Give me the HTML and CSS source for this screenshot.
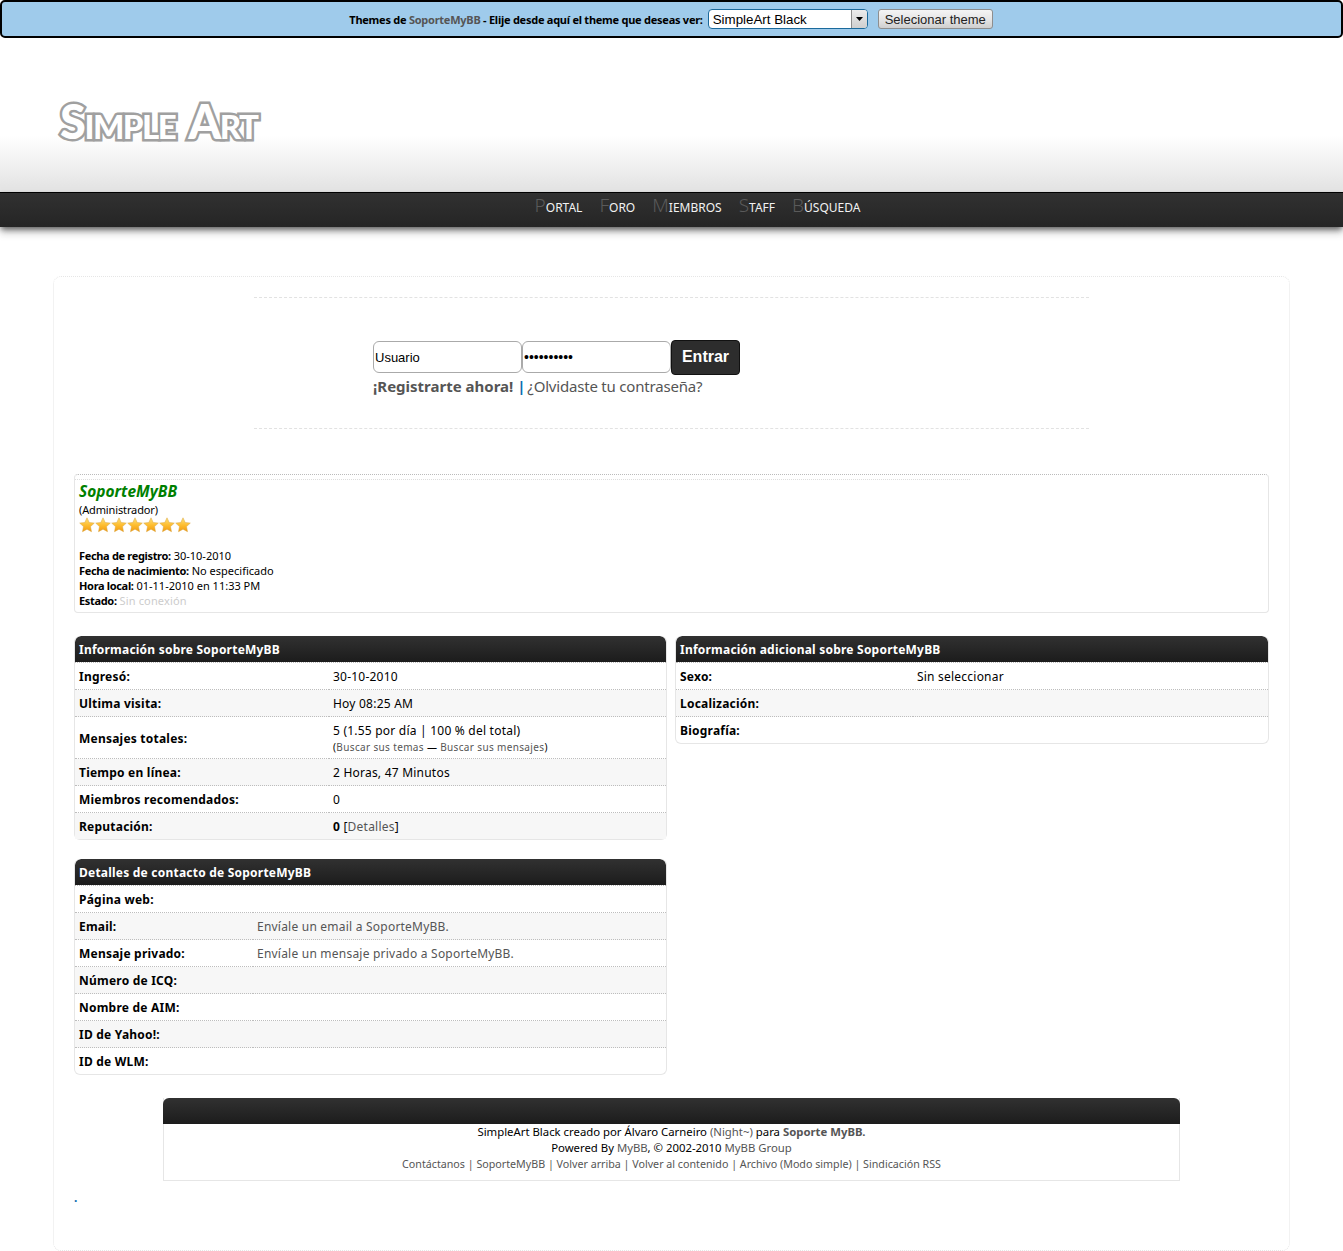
FILE: index.html
```html
<!DOCTYPE html>
<html lang="es">
<head>
<meta charset="utf-8">
<title>Perfil de SoporteMyBB</title>
<link rel="stylesheet" href="styles.css">
</head>
<body>
<svg class="defs" width="0" height="0" aria-hidden="true">
  <defs>
    <linearGradient id="starfill" x1="0" y1="0" x2="0" y2="1">
      <stop offset="0" stop-color="#ffe27a"/>
      <stop offset="0.55" stop-color="#fdbb2d"/>
      <stop offset="1" stop-color="#f09a12"/>
    </linearGradient>
    <symbol id="star" viewBox="0 0 16 16">
      <path d="M8 .8l2.2 4.7 5.1.6-3.8 3.5 1 5.1L8 12.2l-4.5 2.5 1-5.1L.7 6.1l5.1-.6z" fill="url(#starfill)" stroke="#d9a441" stroke-width=".5"/>
    </symbol>
  </defs>
</svg>

<form class="themebar">
  <span class="themebar-label">Themes de <a href="#">SoporteMyBB</a> - Elije desde aquí el theme que deseas ver:</span>
  <span class="selectbox">
    <select class="themeselect"><option>SimpleArt Black</option></select>
    <span class="selectarrow"><svg width="7" height="4" viewBox="0 0 7 4"><path d="M0 0h7L3.5 4z" fill="#000"/></svg></span>
  </span>
  <button type="button" class="themebtn">Selecionar theme</button>
</form>

<header class="masthead">
  <div class="logo">Simple Art</div>
</header>

<nav class="mainnav">
  <a href="#">Portal</a>
  <a href="#">Foro</a>
  <a href="#">Miembros</a>
  <a href="#">Staff</a>
  <a href="#">Búsqueda</a>
</nav>

<main class="page">
  <section class="loginpanel">
    <div class="loginblock">
      <div class="loginrow">
        <input class="logininput" type="text" value="Usuario">
        <input class="logininput pw" type="password" value="contraseña">
        <button type="button" class="loginbtn">Entrar</button>
      </div>
      <div class="loginlinks"><a href="#" class="strong">¡Registrarte ahora!</a> <span class="pipe">|</span> <a href="#" class="forgot">¿Olvidaste tu contraseña?</a></div>
    </div>
  </section>

  <section class="profile">
    <div class="profile-rule"></div>
    <div class="profile-inner">
      <div class="username">SoporteMyBB</div>
      <div class="usertitle">(Administrador)</div>
      <div class="stars">
        <svg class="star"><use href="#star"/></svg><svg class="star"><use href="#star"/></svg><svg class="star"><use href="#star"/></svg><svg class="star"><use href="#star"/></svg><svg class="star"><use href="#star"/></svg><svg class="star"><use href="#star"/></svg><svg class="star"><use href="#star"/></svg>
      </div>
      <div class="facts">
        <div><b>Fecha de registro:</b> 30-10-2010</div>
        <div><b>Fecha de nacimiento:</b> No especificado</div>
        <div><b>Hora local:</b> 01-11-2010 en 11:33 PM</div>
        <div><b>Estado:</b> <span class="offline">Sin conexión</span></div>
      </div>
    </div>
  </section>

  <div class="columns">
    <div class="col">
      <table class="tbox">
        <colgroup><col class="c-info"><col></colgroup>
        <thead><tr><th colspan="2">Información sobre SoporteMyBB</th></tr></thead>
        <tbody>
          <tr><td class="k">Ingresó:</td><td>30-10-2010</td></tr>
          <tr class="alt"><td class="k">Ultima visita:</td><td>Hoy 08:25 AM</td></tr>
          <tr class="tall"><td class="k">Mensajes totales:</td><td>5 (1.55 por día | 100 % del total)<br><span class="small">(<a href="#">Buscar sus temas</a> — <a href="#">Buscar sus mensajes</a>)</span></td></tr>
          <tr class="alt"><td class="k">Tiempo en línea:</td><td>2 Horas, 47 Minutos</td></tr>
          <tr><td class="k">Miembros recomendados:</td><td>0</td></tr>
          <tr class="alt"><td class="k">Reputación:</td><td><b>0</b> [<a href="#">Detalles</a>]</td></tr>
        </tbody>
      </table>
      <table class="tbox contact">
        <colgroup><col class="c-contact"><col></colgroup>
        <thead><tr><th colspan="2">Detalles de contacto de SoporteMyBB</th></tr></thead>
        <tbody>
          <tr><td class="k">Página web:</td><td></td></tr>
          <tr class="alt"><td class="k">Email:</td><td><a href="#">Envíale un email a SoporteMyBB.</a></td></tr>
          <tr><td class="k">Mensaje privado:</td><td><a href="#">Envíale un mensaje privado a SoporteMyBB.</a></td></tr>
          <tr class="alt"><td class="k">Número de ICQ:</td><td></td></tr>
          <tr><td class="k">Nombre de AIM:</td><td></td></tr>
          <tr class="alt"><td class="k">ID de Yahoo!:</td><td></td></tr>
          <tr><td class="k">ID de WLM:</td><td></td></tr>
        </tbody>
      </table>
    </div>
    <div class="col">
      <table class="tbox">
        <colgroup><col class="c-extra"><col></colgroup>
        <thead><tr><th colspan="2">Información adicional sobre SoporteMyBB</th></tr></thead>
        <tbody>
          <tr><td class="k">Sexo:</td><td>Sin seleccionar</td></tr>
          <tr class="alt"><td class="k">Localización:</td><td></td></tr>
          <tr><td class="k">Biografía:</td><td></td></tr>
        </tbody>
      </table>
    </div>
  </div>

  <footer class="credits">
    <div class="credits-head"></div>
    <div class="credits-body">
      <div>SimpleArt Black creado por Álvaro Carneiro <a href="#">(Night~)</a> para <a href="#" class="strong">Soporte MyBB.</a></div>
      <div>Powered By <a href="#">MyBB</a>, © 2002-2010 <a href="#">MyBB Group</a></div>
      <div class="credits-links"><a href="#">Contáctanos</a> | <a href="#">SoporteMyBB</a> | <a href="#">Volver arriba</a> | <a href="#">Volver al contenido</a> | <a href="#">Archivo (Modo simple)</a> | <a href="#">Sindicación RSS</a></div>
    </div>
  </footer>
  <div class="dot">.</div>
</main>
</body>
</html>
```

FILE: styles.css
```css
* { box-sizing: border-box; }
html, body { margin: 0; padding: 0; background: #fff; }
body {
  height: 1251px;
  overflow: hidden;
  font-family: "Noto Sans", "DejaVu Sans", sans-serif;
  font-size: 12px;
  color: #000;
}
a { color: #555; text-decoration: none; }
.defs { position: absolute; }

.themebar {
  height: 38px;
  border: 2px solid #000;
  border-radius: 5px;
  background: #9fcbeb;
  display: flex;
  align-items: center;
  justify-content: center;
  gap: 5px;
  padding-right: 1px;
}
.themebar-label { font-size: 11px; font-weight: 700; letter-spacing: -0.25px; }
.themebar-label a { font-weight: 700; color: #555; }
.selectbox { position: relative; display: block; width: 160px; height: 20px; }
.themeselect {
  appearance: none;
  width: 100%;
  height: 100%;
  border: 1px solid #1b6a9c;
  border-radius: 4px;
  background: #fff;
  padding: 0 0 0 4px;
  font-family: "Liberation Sans", Arial, sans-serif;
  font-size: 13.33px;
  color: #000;
}
.selectarrow {
  position: absolute;
  right: 1px;
  top: 1px;
  bottom: 1px;
  width: 16px;
  display: flex;
  align-items: center;
  justify-content: center;
  background: linear-gradient(#ececec, #cfcfcf);
  border-left: 1px solid #8c8c8c;
  border-radius: 0 3px 3px 0;
}
.themebtn {
  margin-left: 5px;
  width: 115px;
  height: 20px;
  padding: 0;
  border: 1px solid #8e8e8e;
  border-radius: 3px;
  background: linear-gradient(#f4f4f4 0, #e6e6e6 50%, #cfcfcf 100%);
  font-family: "Liberation Sans", Arial, sans-serif;
  font-size: 13px;
  color: #222;
}

.masthead {
  height: 154px;
  background: linear-gradient(#fff 0, #fff 98px, #f0f0f0 128px, #e5e5e5 148px, #e5e5e5 100%);
  padding: 55px 0 0 60px;
}
.logo {
  font-family: "Lato", "Liberation Sans", sans-serif;
  font-variant: small-caps;
  font-weight: 900;
  font-size: 47px;
  line-height: 56px;
  letter-spacing: -1.5px;
  word-spacing: 5px;
  color: #fff;
  -webkit-text-stroke: 5px #a0a0a0;
  paint-order: stroke;
}

.mainnav {
  height: 35px;
  border-top: 1px solid #000;
  background: linear-gradient(#313131, #252525);
  box-shadow: 0 3px 6px -1px rgba(0,0,0,.6), 0 6px 8px rgba(0,0,0,.18);
  display: flex;
  justify-content: center;
  align-items: center;
  gap: 17px;
  padding: 0 0 8px 52px;
  position: relative;
}
.mainnav a {
  color: #f2f2f2;
  text-transform: uppercase;
  font-size: 12px;
  line-height: 20px;
}
.mainnav a::first-letter {
  font-size: 19px;
  font-weight: 300;
  color: #5a5a5a;
}

.page {
  margin: 49px 53px 0;
  width: 1237px;
  height: 975px;
  border: 1px dotted #e6e6e6;
  border-radius: 8px;
  padding: 20px 20px 0;
}

.loginpanel {
  margin: 0 180px;
  height: 132px;
  border-top: 1px dashed #e2e2e2;
  border-bottom: 1px dashed #e2e2e2;
  padding: 42px 0 0 119px;
}
.loginrow { display: flex; align-items: center; height: 35px; }
.logininput {
  width: 149px;
  height: 32px;
  margin-bottom: 1px;
  border: 1px solid #aaa;
  border-radius: 6px;
  padding: 0 1px;
  font-family: "Liberation Sans", Arial, sans-serif;
  font-size: 13px;
  background: #fff;
  color: #000;
}
.pw { font-size: 14px; }
.loginbtn {
  width: 69px;
  height: 35px;
  border: 1px solid #111;
  border-radius: 4px;
  background: #2d2d2d;
  color: #fff;
  font-family: "Liberation Sans", Arial, sans-serif;
  font-size: 16px;
  font-weight: 700;
  padding: 0 0 1px;
}
.loginlinks { font-size: 15px; line-height: 22px; color: #0b6db0; }
.loginlinks a { color: #555; }
.pipe { font-weight: 700; margin-right: -2px; }
.forgot { letter-spacing: -0.2px; }
.strong { font-weight: 700; }

.profile {
  margin-top: 45px;
  height: 139px;
  border-top: 1px dotted #bbb;
  border-bottom: 1px solid #e6e6e6;
  border-left: 1px solid #e6e6e6;
  border-right: 1px solid #e6e6e6;
  border-radius: 4px;
  padding-top: 4px;
}
.profile-rule { width: 75%; border-top: 1px dotted #ddd; }
.profile-inner { padding-left: 4px; }
.username {
  color: #008000;
  font-size: 15.5px;
  font-weight: 700;
  font-style: italic;
  line-height: 23px;
}
.usertitle { font-size: 11px; letter-spacing: -0.13px; line-height: 14px; }
.stars { display: flex; height: 16px; }
.star { width: 16px; height: 16px; display: block; }
.facts { margin-top: 15px; font-size: 11px; line-height: 15px; }
.facts b { letter-spacing: -0.33px; }
.offline { color: #ccc; letter-spacing: 0.15px; }

.columns {
  margin-top: 23px;
  display: grid;
  grid-template-columns: 593px 594px;
  gap: 8px;
  align-items: start;
}
.tbox {
  width: 100%;
  border-collapse: separate;
  border-spacing: 0;
  table-layout: fixed;
  border-radius: 6px;
  border-right: 1px solid #e6e6e6;
  border-left: 1px solid #e6e6e6;
  border-bottom: 1px solid #e6e6e6;
  font-size: 12px;
  letter-spacing: 0.22px;
}
.c-info { width: 254px; }
.c-contact { width: 178px; }
.c-extra { width: 237px; }
.tbox th {
  height: 27px;
  padding: 0 4px;
  text-align: left;
  color: #fff;
  font-size: 12px;
  font-weight: 700;
  background: linear-gradient(#313131 0, #1c1c1c 26px, #fff 26px);
  border-bottom: 1px dotted #bdbdbd;
  border-radius: 6px 6px 0 0;
  background-clip: padding-box;
}
.tbox td {
  height: 27px;
  padding: 1px 4px 0;
  border-bottom: 1px dotted #bdbdbd;
  line-height: 16px;
}
.tbox tbody tr:last-child td { border-bottom: 0; height: 26px; }
.tbox .tall td { height: 42px; padding-top: 2px; }
.tbox .alt td { background: #f7f7f7; }
.k { font-weight: 700; }
.small { font-size: 10px; letter-spacing: 0.35px; line-height: 14px; }
.contact { margin-top: 19px; }

.credits {
  margin: 23px 89px 0;
  width: 1017px;
  border: 1px solid #e6e6e6;
  border-top: 0;
  text-align: center;
}
.credits-head {
  height: 26px;
  margin: 0 -1px;
  border-radius: 6px 6px 0 0;
  background: linear-gradient(#313131, #1c1c1c);
}
.credits-body { font-size: 11.35px; line-height: 16px; padding-bottom: 8px; }
.credits-links { font-size: 10.7px; color: #555; }
.dot { color: #0b6db0; font-size: 12px; font-weight: 700; line-height: 16px; margin-top: 9px; }
```
